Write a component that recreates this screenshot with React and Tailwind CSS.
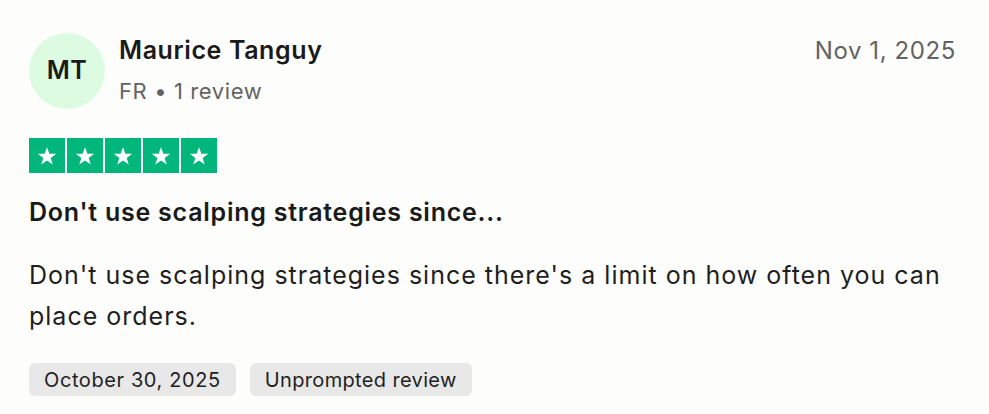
import React from 'react';

const Star = () => (
  <svg viewBox="0 0 24 24" className="w-[22px] h-[22px]" fill="#ffffff">
    <path d="M12 2.5l2.6 7.1h7.5l-6.1 4.5 2.3 7.3L12 17l-6.3 4.4 2.3-7.3-6.1-4.5h7.5z" />
  </svg>
);

export default function App() {
  return (
    <div className="min-h-screen w-full bg-[#fdfdfb] px-[29px] pt-[33px] font-['Inter',sans-serif] text-[#1a1a1a] tracking-[0.6px]">
      <div className="flex items-start justify-between">
        <div className="flex items-start gap-[14px]">
          <div className="w-[76px] h-[76px] rounded-full bg-[#dcfbe0] flex items-center justify-center text-[25px] font-semibold tracking-[0.5px]">
            MT
          </div>
          <div>
            <div className="text-[25px] font-semibold leading-[34px]">Maurice Tanguy</div>
            <div className="text-[22px] text-[#636363] leading-[28px] mt-[10px]">FR • 1 review</div>
          </div>
        </div>
        <div className="text-[24px] text-[#636363] pr-[4px] pt-[1px] leading-[34px]">Nov 1, 2025</div>
      </div>

      <div className="flex gap-[2px] mt-[29px]">
        {[0, 1, 2, 3, 4].map((i) => (
          <div key={i} className="w-[36px] h-[35px] bg-[#00b67a] flex items-center justify-center">
            <Star />
          </div>
        ))}
      </div>

      <div className="mt-[22px] text-[25px] font-semibold leading-[34px] tracking-[0.75px]">Don't use scalping strategies since...</div>

      <p className="mt-[26px] text-[25px] leading-[41px] text-[#1f1f1f] tracking-[1px]">
        Don't use scalping strategies since there's a limit on how often you can place orders.
      </p>

      <div className="flex gap-[14px] mt-[26px]">
        <span className="h-[33px] px-[15px] rounded-[6px] bg-[#e8e8e8] flex items-center text-[20px] text-[#1f1f1f]">October 30, 2025</span>
        <span className="h-[33px] px-[15px] rounded-[6px] bg-[#e8e8e8] flex items-center text-[20px] text-[#1f1f1f] tracking-[0.35px]">Unprompted review</span>
      </div>
    </div>
  );
}
